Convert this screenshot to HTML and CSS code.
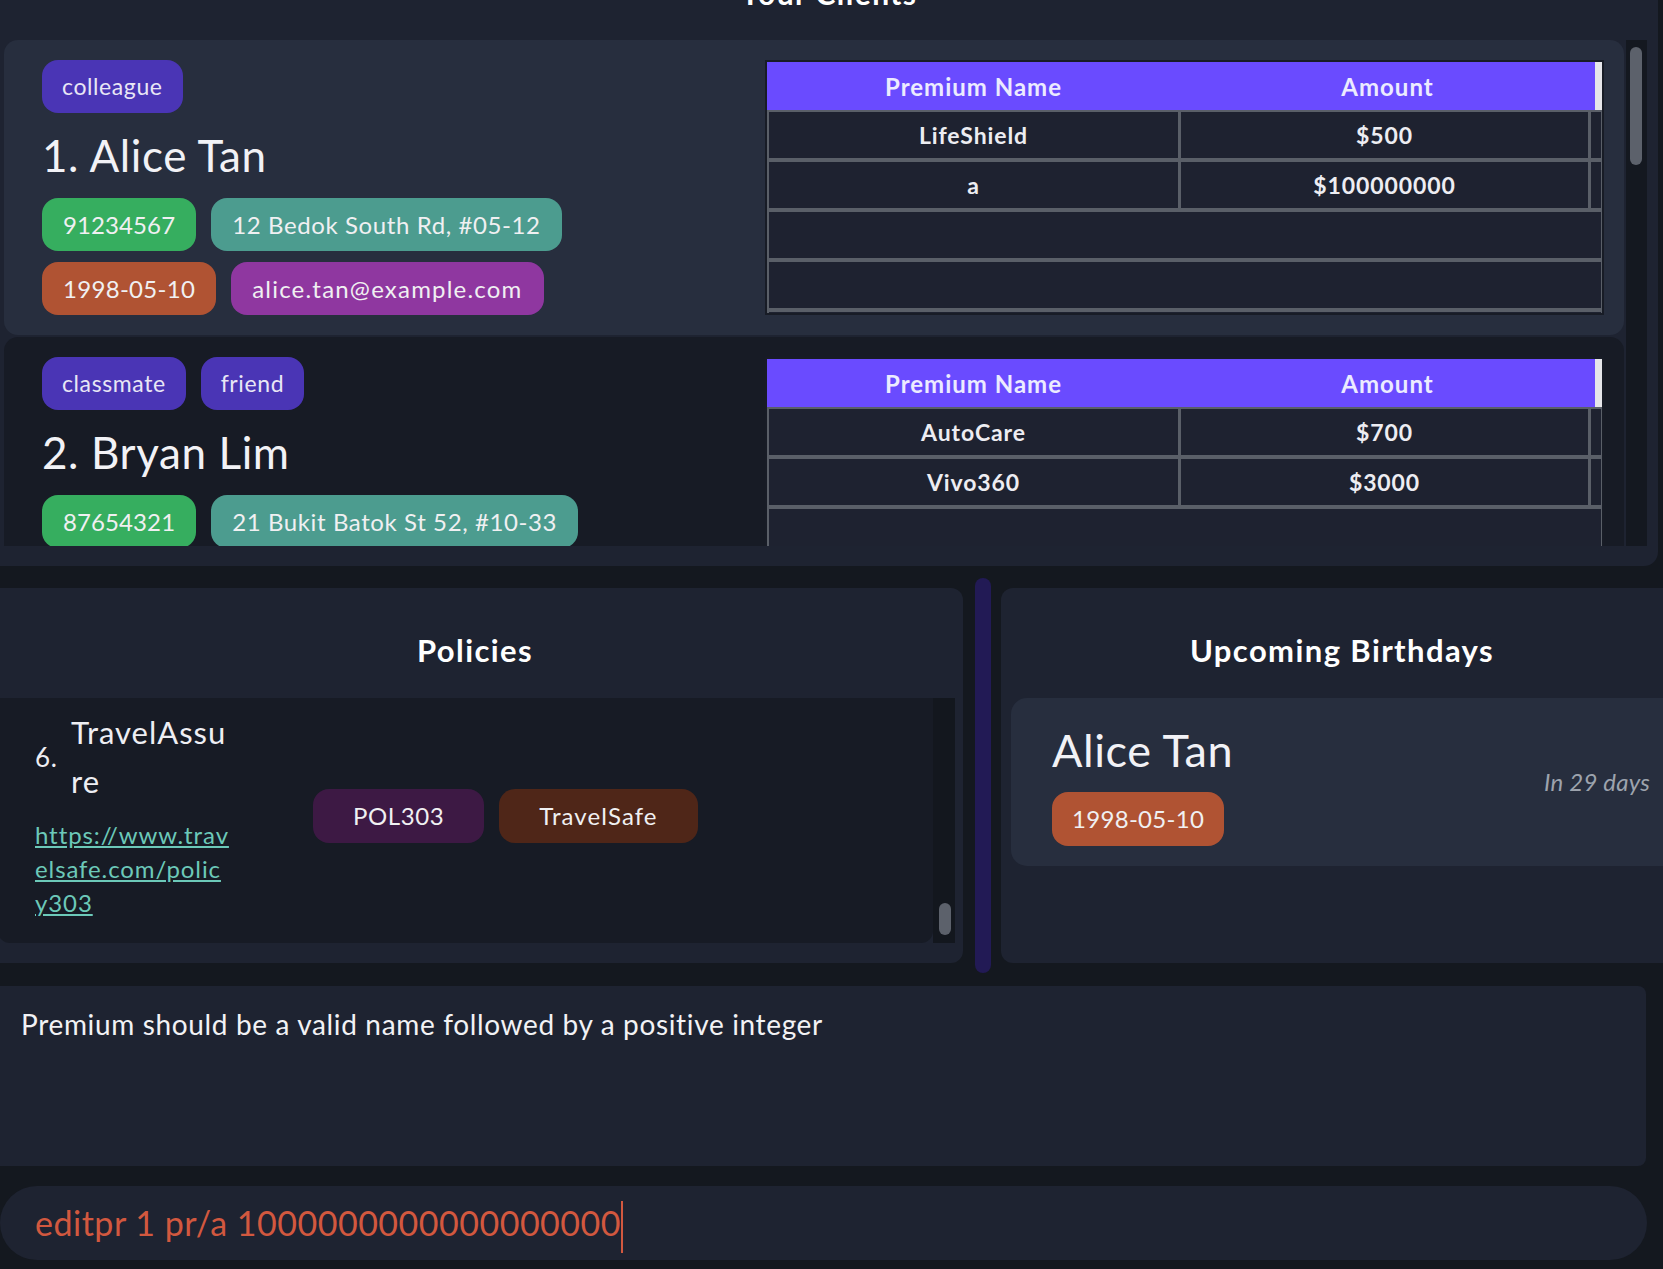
FILE: index.html
```html
<!DOCTYPE html>
<html lang="en">
<head>
    <meta charset="UTF-8">
    <meta name="viewport" content="width=device-width, initial-scale=1.0">
    <title>Clients</title>
    <link rel="stylesheet" href="styles.css">
</head>
<body>
    <section class="clients-panel">
        <h2 class="panel-title clients-title">Your Clients</h2>
        <div class="clients-body">
            <div class="client-list">
                <div class="client-card selected">
                    <div class="client-info">
                        <div class="tag-row"><span class="tag">colleague</span></div>
                        <div class="client-name">1. Alice Tan</div>
                        <div class="pill-row">
                            <span class="pill phone">91234567</span>
                            <span class="pill address">12 Bedok South Rd, #05-12</span>
                        </div>
                        <div class="pill-row">
                            <span class="pill birthday">1998-05-10</span>
                            <span class="pill email">alice.tan@example.com</span>
                        </div>
                    </div>
                    <div class="premium-table">
                        <div class="pt-head"><div>Premium Name</div><div>Amount</div><div class="pt-corner"></div></div>
                        <div class="pt-body">
                            <div class="pt-cell">LifeShield</div><div class="pt-cell">$500</div><div class="pt-cell"></div>
                            <div class="pt-cell">a</div><div class="pt-cell">$100000000</div><div class="pt-cell"></div>
                            <div class="pt-empty"></div>
                            <div class="pt-empty"></div>
                            <div class="pt-empty"></div>
                        </div>
                    </div>
                </div>

                <div class="client-card">
                    <div class="client-info">
                        <div class="tag-row"><span class="tag">classmate</span><span class="tag">friend</span></div>
                        <div class="client-name">2. Bryan Lim</div>
                        <div class="pill-row">
                            <span class="pill phone">87654321</span>
                            <span class="pill address">21 Bukit Batok St 52, #10-33</span>
                        </div>
                    </div>
                    <div class="premium-table">
                        <div class="pt-head"><div>Premium Name</div><div>Amount</div><div class="pt-corner"></div></div>
                        <div class="pt-body">
                            <div class="pt-cell">AutoCare</div><div class="pt-cell">$700</div><div class="pt-cell"></div>
                            <div class="pt-cell">Vivo360</div><div class="pt-cell">$3000</div><div class="pt-cell"></div>
                            <div class="pt-empty"></div>
                            <div class="pt-empty"></div>
                        </div>
                    </div>
                </div>
            </div>
            <div class="scroll-track"><div class="scroll-thumb"></div></div>
        </div>
    </section>

    <div class="lower">
        <section class="panel policies">
            <h2 class="panel-title">Policies</h2>
            <div class="policy-list">
                <div class="policy-card">
                    <div class="policy-main">
                        <div class="policy-head">
                            <span class="policy-index">6.</span>
                            <span class="policy-name">TravelAssu<br>re</span>
                        </div>
                        <a class="policy-link" href="#">https://www.trav<br>elsafe.com/polic<br>y303</a>
                    </div>
                    <span class="pill policy-id">POL303</span>
                    <span class="pill policy-provider">TravelSafe</span>
                </div>
                <div class="policy-scroll"><div class="policy-thumb"></div></div>
            </div>
        </section>

        <div class="splitter"></div>

        <section class="panel birthdays">
            <h2 class="panel-title">Upcoming Birthdays</h2>
            <div class="birthday-list">
                <div class="birthday-card">
                    <div>
                        <div class="birthday-name">Alice Tan</div>
                        <span class="pill birthday">1998-05-10</span>
                    </div>
                    <span class="birthday-days">In 29 days</span>
                </div>
            </div>
        </section>
    </div>

    <div class="result">Premium should be a valid name followed by a positive integer</div>

    <div class="command">editpr 1 pr/a 1000000000000000000<span class="caret"></span></div>
</body>
</html>
```

FILE: styles.css
```css
html { background: #14181f; }
body { margin: 0; height: 1269px; overflow: hidden; background: #14181f; color: #eeeef3; font-family: Lato, "Open Sans", sans-serif; letter-spacing: 0.6px; }

/* top panel: client list */
.clients-panel { width: 1658px; padding-bottom: 20px; background: #1e2331; border-bottom-right-radius: 14px; }
.panel-title { margin: 0; font-size: 31px; font-weight: 700; text-align: center; color: #fff; letter-spacing: 1.4px; }
.clients-title { margin-top: -27px; padding-bottom: 27px; line-height: 40px; font-size: 30px; }
.clients-body { display: flex; height: 506px; margin-left: 4px; }
.client-list { width: 1620px; overflow: hidden; }
.scroll-track { width: 21px; margin-left: 2px; background: #141820; }
.scroll-thumb { width: 12px; height: 118px; margin: 7px 0 0 4px; border-radius: 6px; background: #5c616b; }

.client-card { display: flex; justify-content: space-between; padding: 20px 20px 20px 38px; margin-bottom: 2px; border-radius: 14px; background: #171b25; }
.client-card.selected { background: #272e3e; }
.client-info { display: flex; flex-direction: column; }
.tag-row, .pill-row { display: flex; gap: 15px; }
.pill-row + .pill-row { margin-top: 11px; }
.tag { height: 53px; line-height: 53px; padding: 0 20px; border-radius: 16px; background: #4a35b5; font-size: 23px; color: #e8e6f5; }
.client-name { line-height: 85px; font-size: 44px; color: #f2f2f6; }
.pill { display: inline-block; height: 53px; line-height: 53px; padding: 0 21px; border-radius: 16px; font-size: 24px; color: #f0f0f2; white-space: nowrap; }
.phone { background: #36ae5f; letter-spacing: 0.1px; }
.address { background: #4c9c8f; }
.birthday { background: #b05333; letter-spacing: 0.3px; }
.email { background: #8f37a0; letter-spacing: 1.2px; }

/* premium table */
.premium-table { width: 839px; height: 255px; box-sizing: border-box; border: 2px solid #181c26; background: #1e2230; overflow: hidden; flex-shrink: 0; }
.pt-head { display: grid; grid-template-columns: 413px 415px 7px; height: 48px; background: #6a4bff; font-size: 24px; font-weight: 700; color: #ecebff; letter-spacing: 1px; }
.pt-head div { display: flex; align-items: center; justify-content: center; }
.pt-head .pt-corner { background: #e6e6ea; }
.pt-body { display: grid; grid-template-columns: 409px 407px 10px; grid-auto-rows: 46px; gap: 4px 3px; padding: 2px 1px 0 2px; background: #5a5f68; }
.pt-cell { display: flex; align-items: center; justify-content: center; background: #1e2230; font-size: 23px; font-weight: 700; color: #ededf2; letter-spacing: 0.9px; }
.pt-empty { grid-column: 1 / -1; background: #1e2230; }

/* lower row */
.lower { display: flex; height: 420px; }
.panel { flex-shrink: 0; height: 375px; margin-top: 22px; background: #1e2331; border-radius: 12px; overflow: hidden; }
.panel .panel-title { padding-top: 14px; line-height: 96px; }
.policies { width: 976px; margin-left: -13px; }
.birthdays { width: 682px; }
.splitter { flex-shrink: 0; width: 16px; height: 395px; margin: 12px 10px 0 12px; border-radius: 8px; background: #221a55; }

.policy-list { display: flex; height: 245px; margin: 0 8px 0 11px; }
.policy-card { flex: 1; display: flex; align-items: center; padding: 0 0 9px 37px; border-radius: 0 0 12px 12px; background: #171b25; }
.policy-main { width: 240px; margin-right: 38px; align-self: flex-start; margin-top: 10px; }
.policy-head { display: flex; align-items: center; }
.policy-index { width: 36px; font-size: 26px; }
.policy-name { font-size: 31px; line-height: 49px; letter-spacing: 1px; }
.policy-link { display: block; margin-top: 12px; font-size: 24px; line-height: 34px; color: #6cc9b9; letter-spacing: 0.9px; }
.policy-id { height: 54px; line-height: 54px; padding: 0 40px; background: #3d1944; }
.policy-provider { height: 54px; line-height: 54px; padding: 0 40px; margin-left: 15px; background: #4f2618; letter-spacing: 1.1px; }
.policy-scroll { display: flex; align-items: flex-end; width: 22px; background: #13171e; }
.policy-thumb { width: 12px; height: 32px; margin: 0 0 8px 6px; border-radius: 6px; background: #5c616b; }

.birthday-list { padding-left: 10px; }
.birthday-card { display: flex; justify-content: space-between; align-items: center; padding: 25px 33px 20px 41px; border-radius: 16px; background: #272e3e; }
.birthday-name { line-height: 54px; margin-bottom: 15px; font-size: 45px; color: #f2f2f6; }
.birthday-card .pill { height: 54px; line-height: 54px; padding: 0 20px; }
.birthday-days { margin-bottom: 6px; font-size: 24px; font-style: italic; color: #9da3ad; letter-spacing: 0.2px; }

/* result + command */
.result { width: 1646px; height: 180px; box-sizing: border-box; padding: 21px; border-radius: 0 8px 8px 0; background: #1e2331; font-size: 28px; line-height: 34px; color: #f2f2f5; letter-spacing: 0.65px; }
.command { width: 1647px; height: 74px; box-sizing: border-box; margin-top: 20px; padding-left: 35px; border-radius: 37px; background: #1e2331; font-size: 34px; line-height: 74px; color: #d2583f; white-space: nowrap; letter-spacing: 0.5px; }
.caret { display: inline-block; width: 2px; height: 52px; vertical-align: middle; background: #d2583f; }
```
